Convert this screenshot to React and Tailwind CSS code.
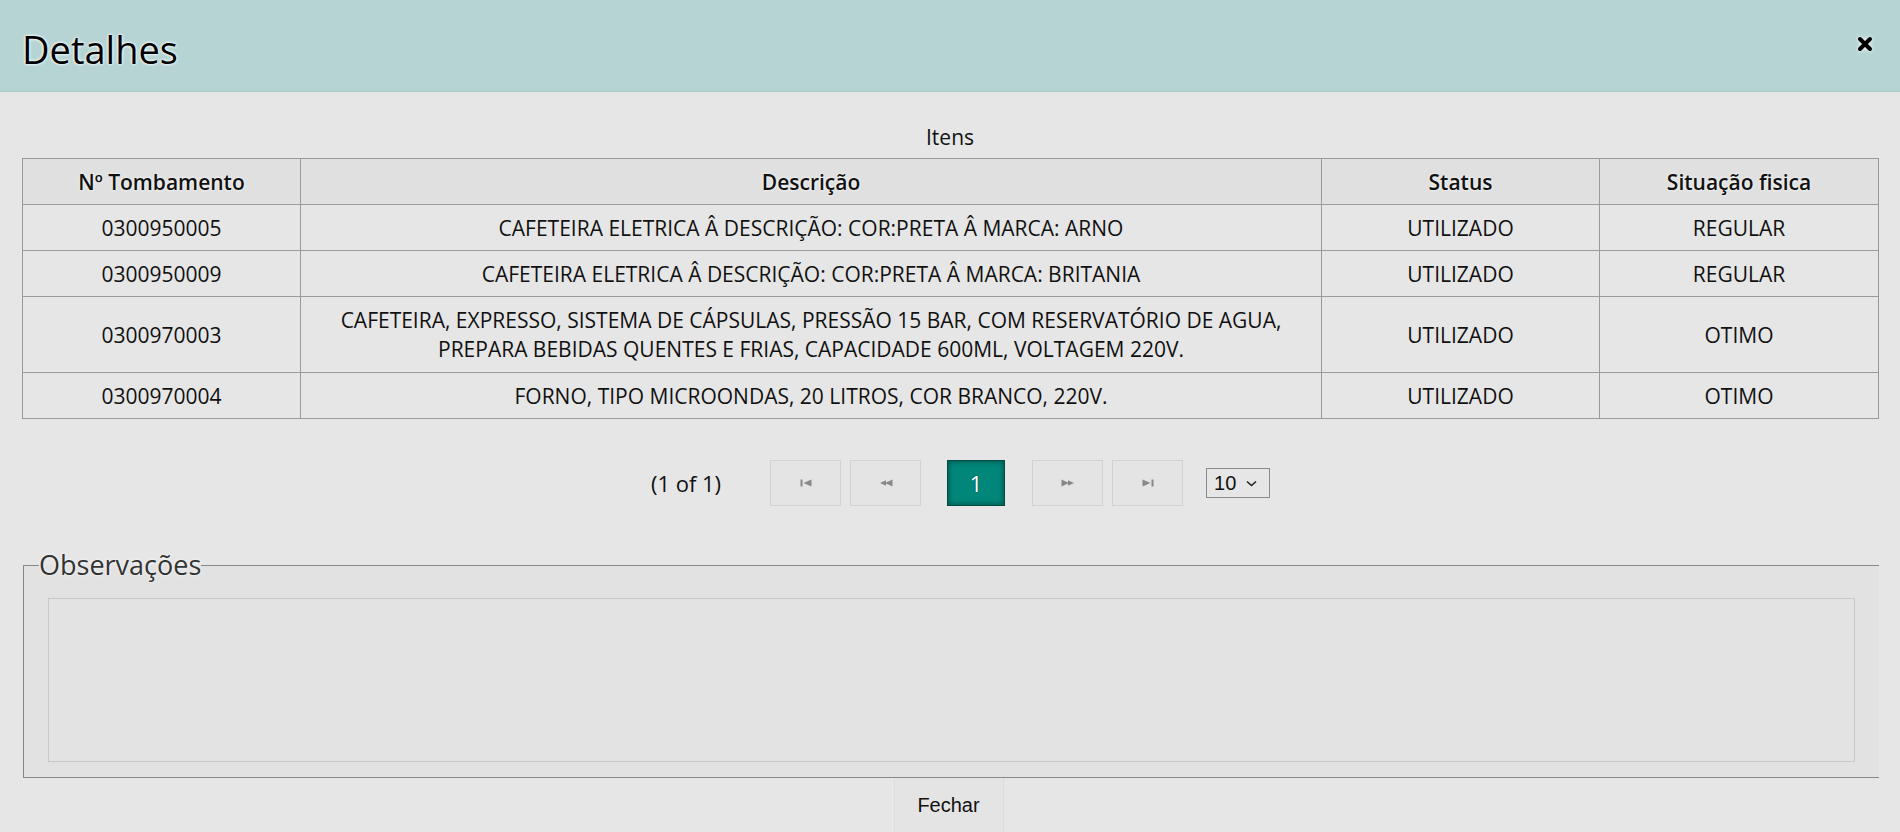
import React from "react";

const rows = [
  ["0300950005", ["CAFETEIRA ELETRICA Â DESCRIÇÃO: COR:PRETA Â MARCA: ARNO"], "UTILIZADO", "REGULAR", false],
  ["0300950009", ["CAFETEIRA ELETRICA Â DESCRIÇÃO: COR:PRETA Â MARCA: BRITANIA"], "UTILIZADO", "REGULAR", false],
  [
    "0300970003",
    [
      "CAFETEIRA, EXPRESSO, SISTEMA DE CÁPSULAS, PRESSÃO 15 BAR, COM RESERVATÓRIO DE AGUA,",
      "PREPARA BEBIDAS QUENTES E FRIAS, CAPACIDADE 600ML, VOLTAGEM 220V.",
    ],
    "UTILIZADO",
    "OTIMO",
    true,
  ],
  ["0300970004", ["FORNO, TIPO MICROONDAS, 20 LITROS, COR BRANCO, 220V."], "UTILIZADO", "OTIMO", false],
];

function NavBtn({ children }) {
  return (
    <div className="w-[71px] h-[46px] border border-[#d2d2d2] bg-[#e4e4e4] flex items-center justify-center">
      {children}
    </div>
  );
}

export default function App() {
  return (
    <div className="w-[1900px] h-[832px] bg-[#e6e6e6] overflow-hidden font-['Open_Sans',sans-serif] text-[#111]">
      <header className="box-border h-[92px] bg-[#b6d4d4] border-b border-[#a8c9c6] flex items-center justify-between pl-[22px] pr-[27px]">
        <h1 className="text-[38px] leading-none text-black mt-[6px] [text-shadow:0_0_3px_#fff,0_0_3px_#fff]">Detalhes</h1>
        <svg width="16" height="16" viewBox="0 0 16 16" className="mb-[4px] [filter:drop-shadow(0_0_2px_#fff)]">
          <path d="M3 3 L13 13 M13 3 L3 13" stroke="#000" strokeWidth="4" strokeLinecap="round" />
        </svg>
      </header>

      <div className="px-[22px]">
        <div className="pt-[31px] h-[59px] leading-[29px] text-center text-[21px] mb-[7px]">Itens</div>
        <table className="w-[1856px] border-collapse table-fixed border border-[#8a8a8a] text-[21px]">
          <colgroup>
            <col className="w-[278px]" />
            <col className="w-[1021px]" />
            <col className="w-[278px]" />
            <col className="w-[279px]" />
          </colgroup>
          <thead>
            <tr className="h-[46px] bg-[#e0e0e0]">
              {["Nº Tombamento", "Descrição", "Status", "Situação fisica"].map((h) => (
                <th
                  key={h}
                  className="border border-[#9a9a9a] font-semibold text-[#111] text-center leading-[29px] p-0 pt-[1px] [text-shadow:0_0_3px_#fff]"
                >
                  {h}
                </th>
              ))}
            </tr>
          </thead>
          <tbody>
            {rows.map(([id, desc, st, sit, tall]) => (
              <tr key={id} className={tall ? "h-[76px] bg-[#e6e6e6]" : "h-[46px] bg-[#e6e6e6]"}>
                <td className="border border-[#9a9a9a] text-center leading-[29px] p-0 pt-[1px]">{id}</td>
                <td className="border border-[#9a9a9a] text-center leading-[29px] p-0 pt-[1px]">
                  {desc.map((l, i) => (
                    <div key={i}>{l}</div>
                  ))}
                </td>
                <td className="border border-[#9a9a9a] text-center leading-[29px] p-0 pt-[1px]">{st}</td>
                <td className="border border-[#9a9a9a] text-center leading-[29px] p-0 pt-[1px]">{sit}</td>
              </tr>
            ))}
          </tbody>
        </table>

        <div className="mt-[41px] h-[46px] flex items-center justify-center">
          <span className="text-[22px] text-[#111] mr-[49px] ml-[21px]">(1 of 1)</span>
          <div className="flex items-center">
            <NavBtn>
              <svg width="14" height="8" viewBox="0 0 14 8">
                <rect x="1.5" y="0.5" width="2" height="7" fill="#888" />
                <path d="M12.5 0.5 L4.5 4 L12.5 7.5 Z" fill="#888" />
              </svg>
            </NavBtn>
            <div className="w-[9px]" />
            <NavBtn>
              <svg width="16" height="8" viewBox="0 0 16 8">
                <path d="M8 1.2 L2 4 L8 6.8 Z" fill="#888" />
                <path d="M14.5 0.5 L7 4 L14.5 7.5 Z" fill="#888" />
              </svg>
            </NavBtn>
            <div className="w-[26px]" />
            <div className="w-[58px] h-[46px] bg-[#00877a] border border-[#004d45] shadow-[inset_0_0_6px_rgba(0,0,0,0.45)] flex items-center justify-center text-white text-[22px] [text-shadow:0_0_2px_rgba(0,0,0,0.4)]">
              1
            </div>
            <div className="w-[27px]" />
            <NavBtn>
              <svg width="16" height="8" viewBox="0 0 16 8">
                <path d="M1.5 0.5 L9 4 L1.5 7.5 Z" fill="#888" />
                <path d="M8 1.2 L14 4 L8 6.8 Z" fill="#888" />
              </svg>
            </NavBtn>
            <div className="w-[9px]" />
            <NavBtn>
              <svg width="14" height="8" viewBox="0 0 14 8">
                <path d="M1.5 0.5 L9.5 4 L1.5 7.5 Z" fill="#888" />
                <rect x="10.5" y="0.5" width="2" height="7" fill="#888" />
              </svg>
            </NavBtn>
            <div className="w-[23px]" />
            <div className="w-[64px] h-[30px] border border-[#8a8a8a] bg-[#e6e6e6] flex items-center pl-[7px] gap-[10px] text-[20px] font-['Liberation_Sans',sans-serif] text-[#111]">
              <span>10</span>
              <svg width="11" height="7" viewBox="0 0 11 7">
                <path d="M1 1.5 L5.5 5.5 L10 1.5" stroke="#222" strokeWidth="1.6" fill="none" />
              </svg>
            </div>
          </div>
        </div>

        <fieldset className="mt-[43px] ml-[1px] w-[1856px] border-t border-l border-b border-r-0 border-[#888] bg-[#e2e2e2] px-[24px] pt-[17px] pb-[15px] m-0">
          <legend className="ml-[-9px] px-0 text-[27px] leading-[32px] text-[#333] [text-shadow:0_0_3px_#fff]">
            Observações
          </legend>
          <div className="h-[164px] border border-[#c8c8c8] bg-[#e3e3e3]" />
        </fieldset>

        <div className="flex justify-center">
          <button className="w-[110px] h-[58px] border border-t-0 border-[#dcdcdc] bg-[#e4e4e4] text-[20px] pb-[4px] font-['Liberation_Sans',sans-serif] text-[#111] ml-[-3px]">
            Fechar
          </button>
        </div>
      </div>
    </div>
  );
}
